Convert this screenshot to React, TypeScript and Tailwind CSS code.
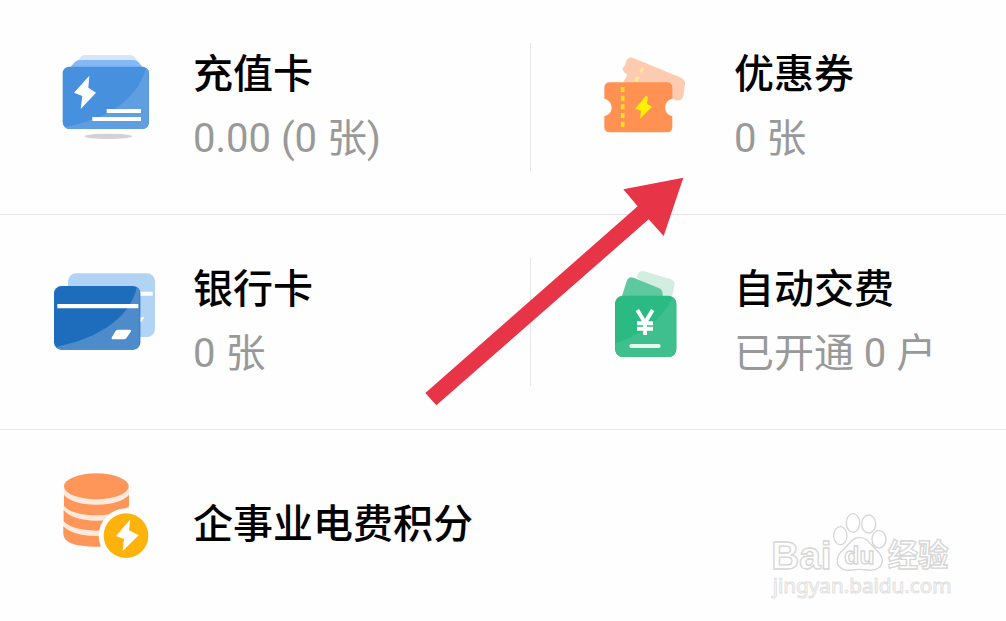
import type { ReactNode } from "react";

function RechargeCardIcon() {
  return (
    <svg className="size-[104px] shrink-0" viewBox="39 42 312 312" aria-hidden="true">
      <path d="M132 42H272Q280 42 285 50L292 60H112L120 50Q125 42 132 42Z" fill="#d3e6fb" />
      <path d="M122 57H280Q290 57 296 64L312 84H86L104 64Q110 57 122 57Z" fill="#85b9f6" />
      <rect x="68" y="77" width="259" height="187" rx="20" fill="#4690dd" />
      <path d="M326 90V244Q326 264 307 264H88Q80 264 76 258C190 235 285 190 318 82Q326 87 326 90Z" fill="#5f9fe1" />
      <path d="M148 104L102 155L127 165L122 204L168 155L145 140Z" fill="#fff" />
      <path d="M200 204H303V216H200ZM157 228H303V240H157Z" fill="#fff" />
      <ellipse cx="205" cy="286" rx="72" ry="8" fill="#d3d1d1" />
    </svg>
  );
}

function CouponIcon() {
  return (
    <svg className="size-[104px] shrink-0" viewBox="12 27 312 312" aria-hidden="true">
      <path
        d="M128 35L268 93Q288 102 285 114L280 150Q274 168 256 162L240 156L100 108L112 86Q100 80 97 66Q105 62 108 47Q114 32 128 35Z"
        fill="#fdcbb0"
      />
      <path d="M159 66L152 79M145 92L137 106" stroke="#fbe695" strokeWidth="10" />
      <path
        d="M60 109H230Q247 109 247 126V158A27 27 0 0 0 247 211V243Q247 259 230 259H60Q43 259 43 243V211A27 27 0 0 0 43 158V126Q43 109 60 109Z"
        fill="#ff9153"
      />
      <path d="M98 123V248" stroke="#ffde22" strokeWidth="11" strokeDasharray="15 11" />
      <path d="M167 150L136 188L153 194L150 219L186 182L171 174L174 152Z" fill="#fff200" />
    </svg>
  );
}

function BankCardIcon() {
  return (
    <svg className="size-[104px] shrink-0" viewBox="39 30 312 312" aria-hidden="true">
      <rect x="84" y="40" width="261" height="191" rx="24" fill="#b2d4f4" />
      <path d="M295 95H338V107H295ZM298 172H313L303 187H298Z" fill="#fff" />
      <rect x="42" y="78" width="259" height="191" rx="22" fill="#1e6dbc" />
      <path d="M299 91V247Q299 269 279 269H64Q54 269 48 261C150 240 265 190 291 82Q299 86 299 91Z" fill="#4d8bca" />
      <path d="M52 132H295V145H52Z" fill="#fff" />
      <path d="M234 209H269Q276 209 272 215L260 233Q257 238 250 238H220Q212 238 216 231L226 214Q229 209 234 209Z" fill="#fff" />
    </svg>
  );
}

function AutoPayIcon() {
  return (
    <svg className="size-[104px] shrink-0" viewBox="-18 30 312 312" aria-hidden="true">
      <path d="M130 33L211 57Q227 63 223 79L217 108H180L110 52L115 40Q120 31 130 33Z" fill="#d2eee3" />
      <path d="M101 53L176 84Q188 89 188 101V114H64L80 64Q86 47 101 53Z" fill="#5ec89e" />
      <rect x="45" y="107" width="184" height="184" rx="24" fill="#2bb984" />
      <path d="M229 133V266Q229 291 205 291H69Q54 291 48 278L45 250C110 230 180 190 218 112Q229 119 229 133Z" fill="#3fbf8e" />
      <path d="M112 150L135 188L158 150M135 187V225M111 190H159M111 206H159" fill="none" stroke="#fff" strokeWidth="12" />
      <path d="M94 258H176" stroke="#e6faf1" strokeWidth="12" strokeLinecap="round" />
    </svg>
  );
}

function PointsIcon() {
  return (
    <svg className="size-[104px] shrink-0" viewBox="9 42 312 312" aria-hidden="true">
      <path d="M42 80H237V225Q237 263 139 263Q42 263 40 225Z" fill="#ffe9dc" />
      <ellipse cx="139" cy="82" rx="97" ry="39" fill="#ff9659" />
      <path d="M42 108Q66 136 139 137Q212 136 237 108V141Q212 168 139 169Q66 168 42 141Z" fill="#ff9659" />
      <path d="M41 153Q66 184 139 185Q212 184 237 153V187Q212 214 139 215Q66 214 41 187Z" fill="#ff9659" />
      <path d="M40 202Q66 230 139 231Q212 230 237 202V225Q237 263 139 263Q42 263 40 225Z" fill="#ff9659" />
      <circle cx="228" cy="230" r="82" fill="#fff" />
      <circle cx="228" cy="230" r="67" fill="#fdb30b" />
      <path d="M241 181L198 231L222 240L218 276L266 229L237 214Z" fill="#fff" />
    </svg>
  );
}

function Cell({ icon, title, value, className = "" }: { icon: ReactNode; title: string; value?: string; className?: string }) {
  return (
    <button type="button" className={`flex items-center gap-9 text-left whitespace-nowrap ${className}`}>
      {icon}
      <span className="flex flex-col text-[40px] leading-[64px]">
        <span className="font-medium text-black">{title}</span>
        {value && <span className="text-[#999]">{value}</span>}
      </span>
    </button>
  );
}

function Row({ children }: { children: ReactNode }) {
  return <div className="grid grid-cols-[19fr_17fr] border-b border-[#e6e6e6] py-[43px]">{children}</div>;
}

function Arrow() {
  return (
    <svg className="pointer-events-none absolute top-[177px] left-[425px] w-[260px]" viewBox="45 51 780 690" aria-hidden="true">
      <path d="M820 53L761 228L716 178L79 736L46 699L683 139L640 88Z" fill="#e83447" />
    </svg>
  );
}

function Watermark() {
  return (
    <svg className="pointer-events-none absolute top-[500px] right-9 w-[210px]" viewBox="0 0 630 330" fill="#fff" stroke="#d6d6d6" strokeWidth="4">
      <g className="font-['Liberation_Sans','Noto_Sans_CJK_SC',sans-serif] font-bold">
        <text x="34" y="207" fontSize="116">Bai</text>
        <text x="383" y="199" fontSize="91">经验</text>
      </g>
      <ellipse cx="241" cy="107" rx="20" ry="27" />
      <ellipse cx="279" cy="69" rx="20" ry="28" />
      <ellipse cx="326" cy="72" rx="21" ry="27" />
      <ellipse cx="357" cy="118" rx="21" ry="26" />
      <path d="M298 112C322 112 332 134 345 146C362 160 370 174 366 190C358 211 338 212 322 210Q298 206 276 210C258 213 238 208 232 190C229 172 238 158 253 146C267 134 276 112 298 112Z" />
      <text x="253" y="193" fontSize="74" className="font-['Liberation_Sans',sans-serif] font-bold">du</text>
      <text x="38" y="280" fontSize="62" stroke="#e0e0e0" strokeWidth="3" className="font-['Noto_Sans',sans-serif]">
        jingyan.baidu.com
      </text>
    </svg>
  );
}

export default function App() {
  return (
    <main className="relative min-h-screen overflow-hidden bg-[#fefefe] font-['Roboto','Noto_Sans_CJK_SC',sans-serif]">
      <Row>
        <Cell icon={<RechargeCardIcon />} title="充值卡" value="0.00 (0 张)" className="border-r border-[#e6e6e6] pl-[53px]" />
        <Cell icon={<CouponIcon />} title="优惠券" value="0 张" className="pl-[63px]" />
      </Row>
      <Row>
        <Cell icon={<BankCardIcon />} title="银行卡" value="0 张" className="border-r border-[#e6e6e6] pl-[53px]" />
        <Cell icon={<AutoPayIcon />} title="自动交费" value="已开通 0 户" className="pl-[63px]" />
      </Row>
      <Cell icon={<PointsIcon />} title="企事业电费积分" className="w-full py-[43px] pl-[53px]" />

      <Arrow />
      <Watermark />
    </main>
  );
}
